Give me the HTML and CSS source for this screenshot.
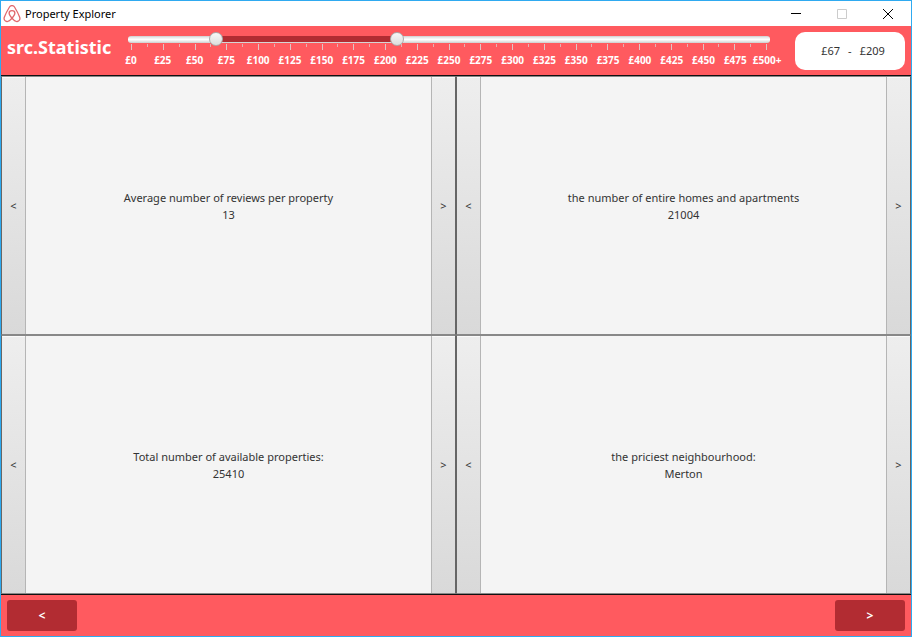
FILE: index.html
```html
<!DOCTYPE html>
<html lang="en">
<head>
<meta charset="utf-8">
<title>Property Explorer</title>
<link rel="stylesheet" href="styles.css">
</head>
<body>
<div class="window">
  <div class="titlebar">
    <svg class="logo" width="18" height="18" viewBox="0 0 18 18" aria-hidden="true">
      <path d="M9 13.2C7 10.9 6.1 9.6 6.1 8.3C6.1 6.7 7.3 5.7 9 5.7S11.900 6.7 11.900 8.300C11.900 9.600 11 10.900 9 13.200C7.200 15.500 5.500 16.800 3.800 16.500C1.700 16.200 .6 14.300 1.300 12.300C2.200 9.800 5.400 3.800 6.500 2C7.200 .9 8 .6 9 .6S10.800 .9 11.500 2C12.600 3.800 15.800 9.800 16.700 12.300C17.400 14.300 16.300 16.200 14.200 16.500C12.500 16.800 10.800 15.500 9 13.200Z"/>
    </svg>
    <span class="caption">Property Explorer</span>
    <button class="control" aria-label="Minimize"><svg width="12" height="12" viewBox="0 0 12 12"><path d="M1 5.500H11"/></svg></button>
    <button class="control" aria-label="Maximize" disabled><svg width="12" height="12" viewBox="0 0 12 12"><path d="M1.500 1.500H10.500V10.500H1.500Z"/></svg></button>
    <button class="control" aria-label="Close"><svg width="12" height="12" viewBox="0 0 12 12"><path d="M1 1L11 11M11 1L1 11"/></svg></button>
  </div>

  <header class="header">
    <h1>src.Statistic</h1>
    <div class="slider">
      <div class="rail">
        <div class="track"><div class="selected" style="margin-left:13.700%;width:28.100%"></div></div>
        <input type="range" min="0" max="500" value="67" aria-label="Lowest price">
        <input type="range" min="0" max="500" value="209" aria-label="Highest price">
      </div>
      <div class="ticks" aria-hidden="true"><i></i><i></i><i></i><i></i><i></i><i></i><i></i><i></i><i></i><i></i><i></i><i></i><i></i><i></i><i></i><i></i><i></i><i></i><i></i><i></i><i></i><i></i><i></i><i></i><i></i><i></i><i></i><i></i><i></i><i></i><i></i><i></i><i></i><i></i><i></i><i></i><i></i><i></i><i></i><i></i><i></i></div>
      <div class="labels"><span>£0</span><span>£25</span><span>£50</span><span>£75</span><span>£100</span><span>£125</span><span>£150</span><span>£175</span><span>£200</span><span>£225</span><span>£250</span><span>£275</span><span>£300</span><span>£325</span><span>£350</span><span>£375</span><span>£400</span><span>£425</span><span>£450</span><span>£475</span><span>£500+</span></div>
    </div>
    <output class="range"><span>£67</span><span>-</span><span>£209</span></output>
  </header>

  <main class="grid">
    <section class="panel">
      <button class="step prev" aria-label="Previous statistic">&lt;</button>
      <div class="stat"><p>Average number of reviews per property</p><p>13</p></div>
      <button class="step next" aria-label="Next statistic">&gt;</button>
    </section>
    <section class="panel">
      <button class="step prev" aria-label="Previous statistic">&lt;</button>
      <div class="stat"><p>the number of entire homes and apartments</p><p>21004</p></div>
      <button class="step next" aria-label="Next statistic">&gt;</button>
    </section>
    <section class="panel">
      <button class="step prev" aria-label="Previous statistic">&lt;</button>
      <div class="stat"><p>Total number of available properties:</p><p>25410</p></div>
      <button class="step next" aria-label="Next statistic">&gt;</button>
    </section>
    <section class="panel">
      <button class="step prev" aria-label="Previous statistic">&lt;</button>
      <div class="stat"><p>the priciest neighbourhood:</p><p>Merton</p></div>
      <button class="step next" aria-label="Next statistic">&gt;</button>
    </section>
  </main>

  <footer class="footer">
    <button class="page" aria-label="Previous page">&lt;</button>
    <button class="page" aria-label="Next page">&gt;</button>
  </footer>
</div>
</body>
</html>
```
FILE: styles.css
```css
* { box-sizing: border-box; }

body {
  margin: 0;
  font: 11px/17px "Noto Sans", "Open Sans", sans-serif;
  color: #333;
}

button { font: inherit; padding: 0; border: 0; }

.window {
  display: flex;
  flex-direction: column;
  min-height: 100vh;
  border: 1px solid #2faaf0;
  background: #f4f4f4;
}

.titlebar {
  display: flex;
  align-items: center;
  height: 25px;
  padding-left: 2px;
  background: #fff;
  color: #000;
}
.logo { fill: none; stroke: #e0686c; stroke-width: 1.300; }
.caption { flex: 1; padding-left: 4px; }
.control { display: grid; place-items: center; width: 46px; height: 25px; background: none; }
.control svg { fill: none; stroke: #000; }
.control:disabled svg { stroke: #ccc; }

.header {
  display: flex;
  align-items: center;
  height: 50px;
  padding: 0 6px;
  background: #ff5a5f;
  border-bottom: 1px solid #111;
  color: #fff;
}
h1 { width: 108px; margin: 0; padding-bottom: 8px; font-size: 18px; line-height: 24px; white-space: nowrap; }

.slider { flex: 1; height: 42px; margin-right: 12px; padding-top: 3px; }
.rail { position: relative; height: 11px; margin: 0 9px; }
.track {
  position: absolute;
  inset: 3px 4px 1px;
  border-radius: 3px;
  background: linear-gradient(#ccc, #e8e8e8 20%, #fff 50%, #e4e4e4 80%, #ccc);
}
.selected { height: 6px; background: #b22c32; }
.rail input {
  position: absolute;
  top: -1px;
  left: 0;
  width: 100%;
  height: 14px;
  margin: 0;
  appearance: none;
  background: none;
  pointer-events: none;
}
.rail input::-webkit-slider-thumb {
  appearance: none;
  width: 14px;
  height: 14px;
  border: 1px solid #aaa;
  border-radius: 50%;
  background: linear-gradient(#f8f8f8, #dcdcdc);
  pointer-events: auto;
}
.ticks { display: flex; justify-content: space-between; height: 8px; margin: 0 16px; }
.ticks i { width: 1px; height: 3px; background: #e5b0b0; }
.ticks i:nth-child(odd) { height: 6px; background: #e0c4c4; }
.labels { display: flex; font-family: "Open Sans", sans-serif; font-size: 10px; font-weight: 700; line-height: 16px; }
.labels span { flex: 1 1 0; min-width: 0; display: flex; justify-content: center; white-space: nowrap; }

.range {
  display: flex;
  justify-content: center;
  gap: 8px;
  width: 110px;
  height: 38px;
  padding-left: 6px;
  border-radius: 10px;
  background: #fff;
  color: #333;
  line-height: 38px;
}

.grid { flex: 1; display: grid; grid-template-columns: 1fr 1fr; grid-template-rows: 1fr 1fr; }
.panel {
  display: flex;
  border: 1px solid #666;
  border-top-color: #888;
  border-bottom-color: #888;
}
.stat { flex: 1; display: flex; flex-direction: column; justify-content: center; text-align: center; }
.stat p { margin: 0; }
.step {
  width: 24px;
  background: linear-gradient(#eee, #d9d9d9);
  color: #333;
  box-shadow: inset 0 1px #fafafa;
}
.prev { border-right: 1px solid #b5b5b5; }
.next { border-left: 1px solid #b5b5b5; }

.footer {
  display: flex;
  justify-content: space-between;
  padding: 5px 6px;
  border-top: 1px solid #111;
  background: #ff5a5f;
}
.page { width: 70px; height: 31px; border-radius: 3px; background: #b22c32; color: #fff; font-size: 12px; font-weight: 700; }
```
